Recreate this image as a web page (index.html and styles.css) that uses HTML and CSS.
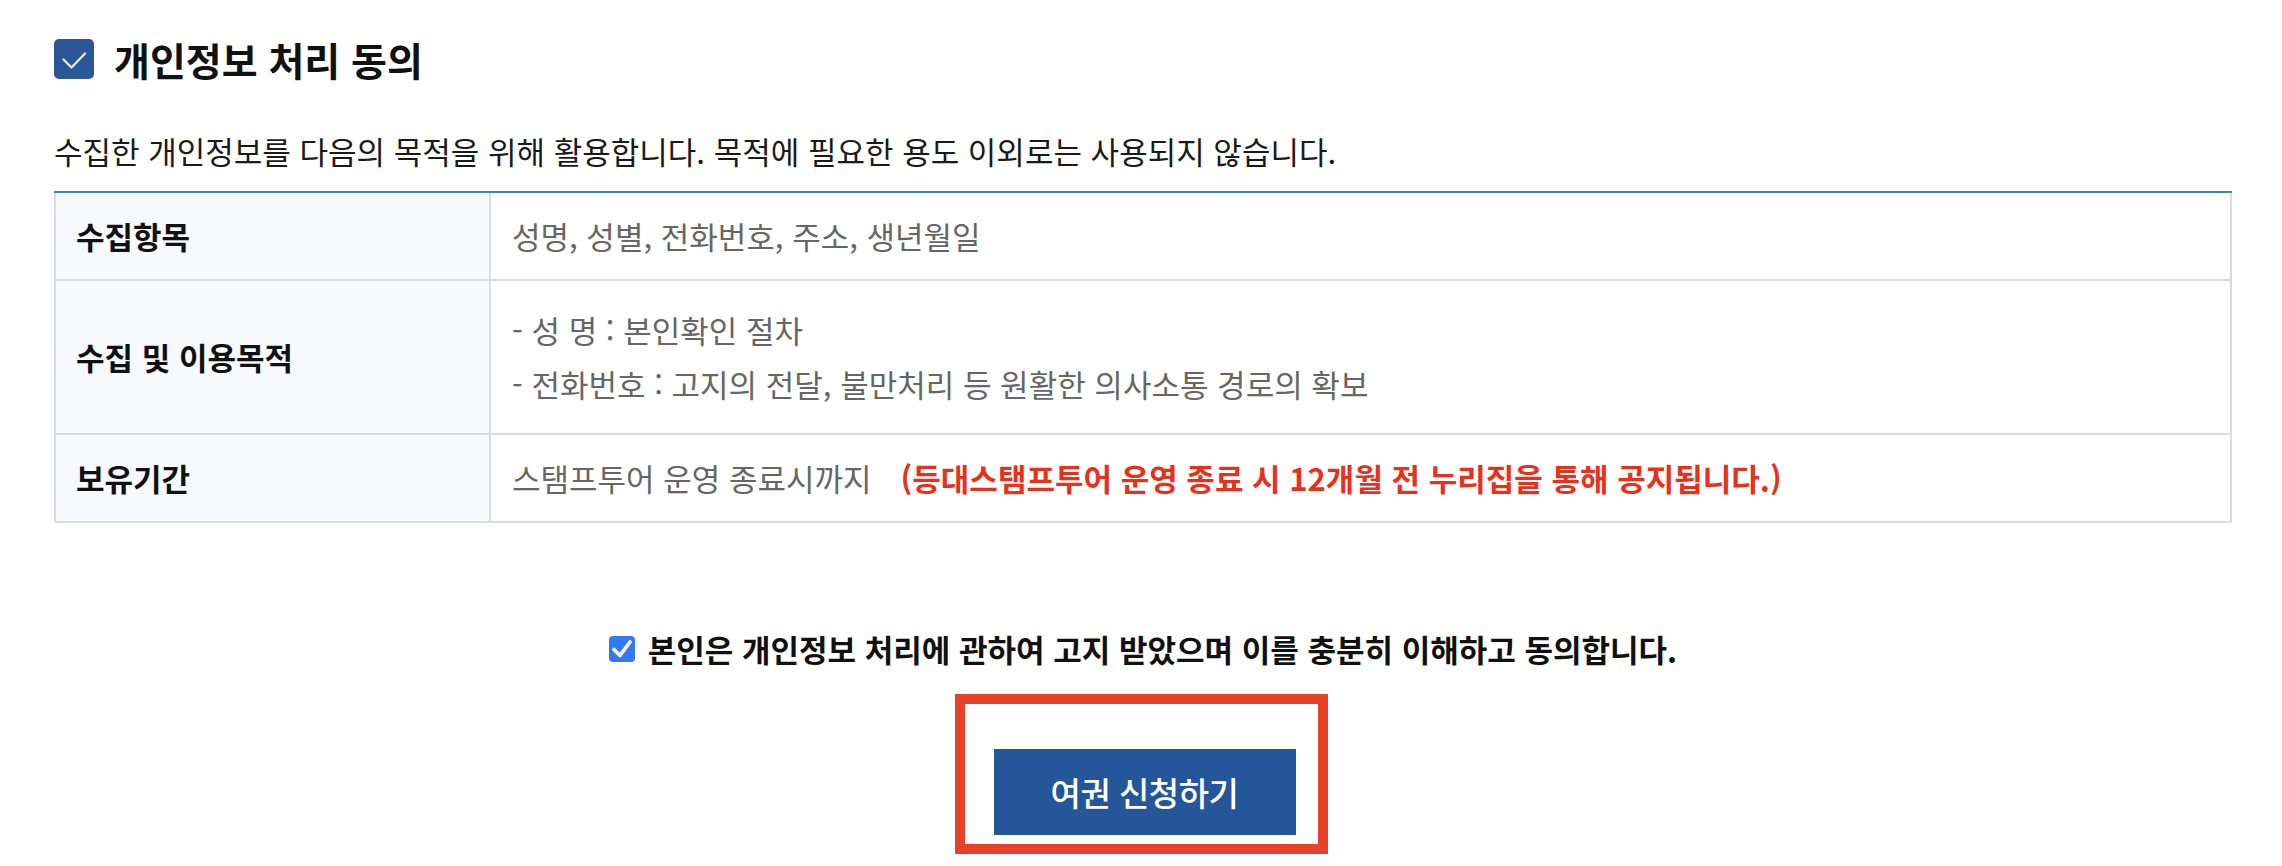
FILE: index.html
```html
<!DOCTYPE html>
<html lang="ko">
<head>
<meta charset="utf-8">
<title>개인정보 처리 동의</title>
<link rel="stylesheet" href="styles.css">
</head>
<body>
<div class="wrap">
  <div class="title-row">
    <span class="title-check">
      <svg width="40" height="40" viewBox="0 0 40 40"><rect x="0" y="0" width="40" height="40" rx="5" fill="#2b5798"/><path d="M9.5 20.5 L17.5 28.5 L31 14.5" fill="none" stroke="#e6edf7" stroke-width="2.2" stroke-linecap="round" stroke-linejoin="round"/></svg>
    </span>
    <h2 class="title">개인정보 처리 동의</h2>
  </div>
  <p class="desc">수집한 개인정보를 다음의 목적을 위해 활용합니다. 목적에 필요한 용도 이외로는 사용되지 않습니다.</p>
  <table class="info">
    <tbody>
      <tr>
        <th>수집항목</th>
        <td>성명, 성별, 전화번호, 주소, 생년월일</td>
      </tr>
      <tr>
        <th>수집 및 이용목적</th>
        <td class="multi">
          <div>- 성 명 : 본인확인 절차</div>
          <div>- 전화번호 : 고지의 전달, 불만처리 등 원활한 의사소통 경로의 확보</div>
        </td>
      </tr>
      <tr>
        <th>보유기간</th>
        <td>스탬프투어 운영 종료시까지<span class="warn">(등대스탬프투어 운영 종료 시 12개월 전 누리집을 통해 공지됩니다.)</span></td>
      </tr>
    </tbody>
  </table>
  <div class="agree">
    <span class="agree-check">
      <svg width="26" height="26" viewBox="0 0 26 26"><rect x="0" y="0" width="26" height="26" rx="4" fill="#3478f6"/><path d="M5 13.5 L11 19.5 L21 6" fill="none" stroke="#ffffff" stroke-width="3.6" stroke-linecap="round" stroke-linejoin="round"/></svg>
    </span>
    <span class="agree-text">본인은 개인정보 처리에 관하여 고지 받았으며 이를 충분히 이해하고 동의합니다.</span>
  </div>
  <div class="btn-area">
    <div class="highlight">
      <button class="btn" type="button">여권 신청하기</button>
    </div>
  </div>
</div>
</body>
</html>
```

FILE: styles.css
```css
html, body {
  margin: 0;
  padding: 0;
  background: #ffffff;
}
body {
  font-family: "Noto Sans CJK KR", "Noto Sans", sans-serif;
  color: #111111;
  font-size: 31px;
}
.wrap {
  padding: 39px 50px 0 54px;
}
.title-row {
  display: flex;
  align-items: center;
  height: 40px;
}
.title-check {
  display: block;
  width: 40px;
  height: 40px;
  flex: none;
}
.title-check svg {
  display: block;
}
.title {
  margin: 0 0 0 20px;
  font-size: 39px;
  font-weight: 700;
  line-height: 40px;
  color: #111111;
}
.desc {
  margin: 52px 0 0 0;
  line-height: 40px;
  color: #1a1a1a;
}
.info {
  margin-top: 20px;
  width: 100%;
  border-collapse: separate;
  border-spacing: 0;
  border-top: 2px solid #3b81d6;
}
.info th,
.info td {
  border-right: 2px solid #dcdcdc;
  border-bottom: 2px solid #dcdcdc;
  line-height: 54px;
  padding: 16px 21px;
  vertical-align: middle;
  text-align: left;
}
.info th {
  width: 392px;
  border-left: 2px solid #dcdcdc;
  background: #f8f9fd;
  font-weight: 700;
  color: #111111;
  padding-left: 20px;
}
.info td {
  color: #666666;
  font-weight: 400;
}
.info td.multi {
  padding-top: 22px;
  padding-bottom: 22px;
}
.warn {
  margin-left: 29px;
  color: #e8311d;
  font-weight: 700;
}
.agree {
  margin-top: 106px;
  display: flex;
  justify-content: center;
  align-items: center;
  height: 40px;
}
.agree-check {
  display: block;
  width: 26px;
  height: 26px;
  margin-right: 13px;
}
.agree-check svg {
  display: block;
}
.agree-text {
  font-weight: 700;
  line-height: 40px;
  color: #111111;
}
.btn-area {
  margin-top: 25px;
  display: flex;
  justify-content: center;
  padding-right: 4px;
}
.highlight {
  border: 10px solid #e8412a;
  padding: 45px 22px 9px 29px;
}
.btn {
  display: block;
  width: 302px;
  height: 86px;
  border: 0;
  margin: 0;
  background: #25569a;
  color: #ffffff;
  font-family: "Noto Sans CJK KR", "Noto Sans", sans-serif;
  font-size: 33px;
  font-weight: 500;
  letter-spacing: -0.5px;
  cursor: pointer;
}
```
